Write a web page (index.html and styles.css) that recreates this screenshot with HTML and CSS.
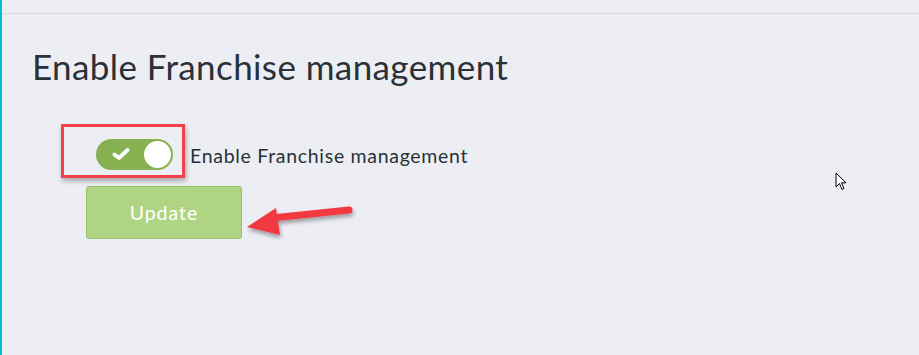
FILE: index.html
```html
<!DOCTYPE html>
<html>
<head>
<meta charset="utf-8">
<link rel="stylesheet" href="styles.css">
</head>
<body>
<div class="page">
  <div class="topbar"></div>
  <main class="content">
    <h1 class="title">Enable Franchise management</h1>
    <div class="field">
      <div class="highlight">
        <span class="toggle">
          <svg class="check" width="18" height="14" viewBox="0 0 18 14"><path d="M2.5 7.5 L7 11 L15.5 3" fill="none" stroke="#fff" stroke-width="3.8" stroke-linecap="round" stroke-linejoin="round"/></svg>
          <span class="knob"></span>
        </span>
      </div>
      <span class="label">Enable Franchise management</span>
    </div>
    <div class="actions">
      <button class="update">Update</button>
      <svg class="arrow" width="120" height="40" viewBox="0 0 120 40">
        <defs><filter id="sh" x="-20%" y="-50%" width="140%" height="200%"><feDropShadow dx="1" dy="3" stdDeviation="2" flood-color="#000" flood-opacity="0.35"/></filter></defs>
        <g filter="url(#sh)">
          <path d="M107 6 L30 14" stroke="#f2393f" stroke-width="7" stroke-linecap="round"/>
          <path d="M5 23 L34 4 L38 31 Z" fill="#f2393f"/>
        </g>
      </svg>
    </div>
  </main>
  <svg class="cursor" width="14" height="20" viewBox="0 0 14 20"><path d="M1 1 L1 15 L4.5 11.5 L7 17.5 L9 16.5 L6.5 10.8 L11 10.8 Z" fill="#fff" stroke="#000" stroke-width="1" stroke-linejoin="round"/></svg>
</div>
</body>
</html>
```

FILE: styles.css
```css
html, body {
  margin: 0;
  padding: 0;
  background: #eceef3;
}
.page {
  position: relative;
  width: 919px;
  height: 355px;
  box-sizing: border-box;
  border-left: 2px solid #00bcd4;
  font-family: "Lato", "Open Sans", sans-serif;
  color: #2b3138;
  overflow: hidden;
}
.topbar {
  height: 13px;
  border-bottom: 1px solid #d5d8dd;
}
.content {
  padding: 32px 0 0 30px;
}
.title {
  margin: 0;
  font-size: 35px;
  font-weight: 400;
  line-height: 40px;
  letter-spacing: 0.4px;
}
.field {
  display: flex;
  align-items: center;
  margin-top: 38px;
  margin-left: 29px;
}
.highlight {
  height: 48px;
  border: 3px solid #f0414a;
  box-shadow: 1px 3px 5px rgba(0,0,0,0.3);
  display: flex;
  align-items: center;
  justify-content: flex-end;
  padding-right: 9px;
  box-sizing: content-box;
  width: 109px;
}
.toggle {
  width: 77px;
  height: 31px;
  border-radius: 16px;
  background: #87b150;
  display: flex;
  align-items: center;
  justify-content: space-between;
  padding: 0 2px 0 16px;
  box-sizing: border-box;
  margin-top: 6px;
}
.check { display: block; }
.knob {
  width: 27px;
  height: 27px;
  border-radius: 50%;
  background: #fff;
}
.label {
  font-size: 19.5px;
  letter-spacing: 0.7px;
  margin-left: 5px;
  margin-top: 8px;
}
.actions {
  display: flex;
  align-items: flex-start;
  margin-top: 8px;
  margin-left: 54px;
}
.update {
  width: 156px;
  height: 53px;
  border: 1px solid #96c265;
  border-radius: 3px;
  background: #afd584;
  color: #fff;
  font-family: "Lato", "Open Sans", sans-serif;
  font-size: 19.5px;
  letter-spacing: 1px;
  padding: 0;
}
.arrow {
  margin-left: 0;
  margin-top: 18px;
}
.cursor {
  position: absolute;
  left: 833px;
  top: 172px;
}
```
